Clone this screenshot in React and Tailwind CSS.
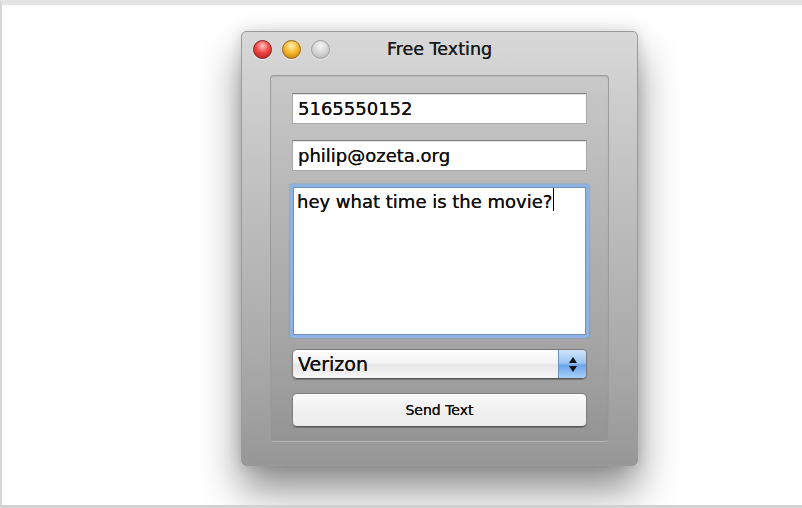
import React from "react";

const font = { fontFamily: '"DejaVu Sans", "Liberation Sans", sans-serif' };

function Light({ color }) {
  const fills = {
    red: "bg-[radial-gradient(circle_at_50%_30%,#ffc4c4_0%,#f04844_45%,#b01818_100%)] border-[#8a1b1b]",
    yellow: "bg-[radial-gradient(circle_at_50%_30%,#fff3b8_0%,#f7bb30_45%,#bf7208_100%)] border-[#9a6510]",
    grey: "bg-[radial-gradient(circle_at_50%_30%,#f6f6f6_0%,#d6d6d6_50%,#adadad_100%)] border-[#a0a0a0]",
  };
  return <div className={`w-[19px] h-[19px] rounded-full border ${fills[color]} shadow-[0_1px_1px_rgba(255,255,255,0.6)]`} />;
}

function Field({ children }) {
  return (
    <div className="h-[31px] bg-white border border-[#a9a9a9] border-t-[#7e7e7e] shadow-[inset_0_1px_1px_rgba(0,0,0,0.12)] flex items-center pl-[5px] text-[18px] text-[#111] [text-shadow:0_0_0.6px_#000]">
      {children}
    </div>
  );
}

export default function App() {
  return (
    <div style={font} className="w-[802px] h-[508px] bg-white border-t-[5px] border-t-[#e4e4e4] border-l-2 border-l-[#d6d6d6] border-b-[3px] border-b-[#d2d2d2] overflow-hidden">
      <div className="ml-[239px] mt-[26px] w-[397px] h-[435px] rounded-[5px] border border-[#9a9a9a] bg-[linear-gradient(#d8d8d8,#c4c4c4_30%,#aaaaaa_75%,#979797)] shadow-[0_24px_40px_rgba(0,0,0,0.45),0_0_14px_rgba(0,0,0,0.15)] flex flex-col">
        <div className="relative h-[34px] flex items-center px-[11px] gap-[10px]">
          <Light color="red" />
          <Light color="yellow" />
          <Light color="grey" />
          <div className="absolute inset-0 flex items-center justify-center text-[17.5px] text-[#1c1c1c] [text-shadow:0_0_0.5px_#000]">
            Free Texting
          </div>
        </div>
        <div className="mt-[9px] mx-[28px] h-[367px] rounded-[4px] border border-[#9c9c9c] border-b-[#b4b4b4] bg-[rgba(0,0,0,0.04)] shadow-[inset_0_1px_1px_rgba(0,0,0,0.08)] px-[21px] pt-[17px] flex flex-col">
          <Field>5165550152</Field>
          <div className="mt-[16px]">
            <Field>philip@ozeta.org</Field>
          </div>
          <div className="mt-[13px] -mx-[2px] h-[154px] rounded-[3px] p-[3px] bg-[#8fb3e0] shadow-[0_0_2px_rgba(80,130,200,0.8)]">
            <div className="h-full bg-white border border-[#6f8fbd] pl-[3px] pt-0 text-[18px] text-[#111] [text-shadow:0_0_0.6px_#000] flex items-start">
              <span>hey what time is the movie?</span>
              <span className="w-px h-[23px] bg-black ml-px" />
            </div>
          </div>
          <div className="mt-[11px] h-[30px] rounded-[5px] border border-[#7a7a7a] border-b-[#555] shadow-[0_1px_1px_rgba(0,0,0,0.25)] flex overflow-hidden bg-[linear-gradient(#ffffff,#f3f3f3_45%,#e6e6e6_55%,#f7f7f7)]">
            <div className="flex-1 flex items-center pl-[5px] text-[19px] text-[#111] [text-shadow:0_0_0.6px_#000]">Verizon</div>
            <div className="w-[28px] border-l border-[#6f8fbd] bg-[linear-gradient(#cfe3fa,#9ec6f2_45%,#6aa5ea_55%,#a9d0fa)] flex flex-col items-center justify-center gap-[3px]">
              <svg width="8" height="6" viewBox="0 0 8 6"><path d="M4 0 L8 6 L0 6 Z" fill="#111" /></svg>
              <svg width="8" height="6" viewBox="0 0 8 6"><path d="M0 0 L8 0 L4 6 Z" fill="#111" /></svg>
            </div>
          </div>
          <div className="mt-[14px] h-[34px] rounded-[5px] border border-[#7e7e7e] border-b-[#555] shadow-[0_1px_1px_rgba(0,0,0,0.25)] bg-[linear-gradient(#fafafa,#f0f0f0_50%,#ececec)] flex items-center justify-center text-[14px] text-[#111] [text-shadow:0_0_0.5px_#000]">
            Send Text
          </div>
        </div>
      </div>
    </div>
  );
}
